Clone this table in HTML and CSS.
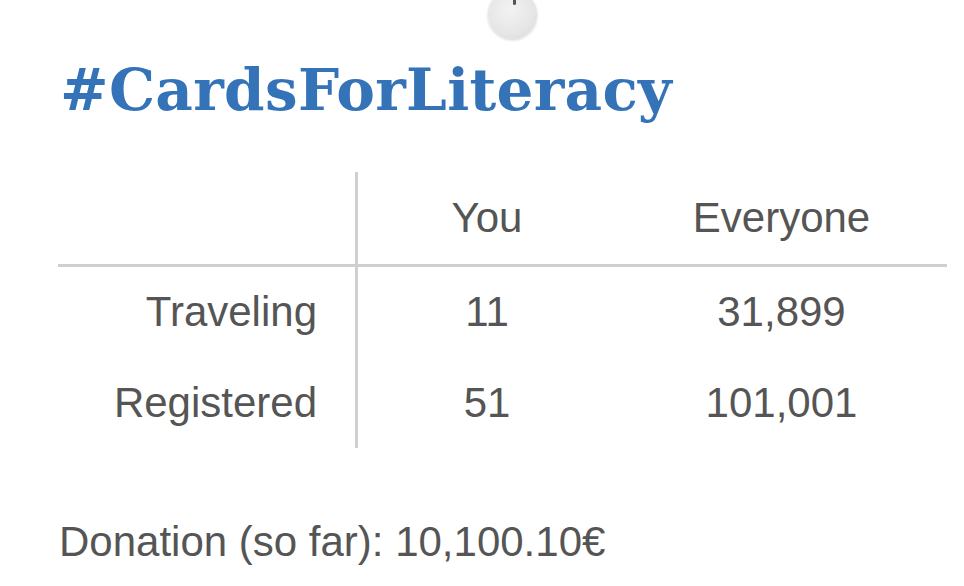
FILE: index.html
```html
<!DOCTYPE html>
<html>
<head>
<meta charset="utf-8">
<link rel="stylesheet" href="styles.css">
</head>
<body>
<div class="refresh"><span class="tick"></span></div>
<main class="page">
  <h1 class="title">#CardsForLiteracy</h1>
  <table class="stats">
    <thead>
      <tr>
        <th class="label"></th>
        <th class="col">You</th>
        <th class="col">Everyone</th>
      </tr>
    </thead>
    <tbody>
      <tr>
        <td class="label">Traveling</td>
        <td class="col">11</td>
        <td class="col">31,899</td>
      </tr>
      <tr>
        <td class="label">Registered</td>
        <td class="col">51</td>
        <td class="col">101,001</td>
      </tr>
    </tbody>
  </table>
  <p class="donation">Donation (so far): 10,100.10€</p>
</main>
</body>
</html>
```
FILE: styles.css
```css
html, body {
  margin: 0;
  padding: 0;
  background: #ffffff;
  overflow: hidden;
}
body {
  width: 964px;
  height: 586px;
  position: relative;
  font-family: "Liberation Sans", Arial, sans-serif;
  color: #555555;
}
.refresh {
  position: absolute;
  left: 488px;
  top: -10px;
  width: 49px;
  height: 49px;
  border-radius: 50%;
  background: radial-gradient(circle at 45% 40%, #f2f2f2 0%, #e6e6e6 60%, #d6d6d6 100%);
  box-shadow: 0 1px 3px rgba(0,0,0,0.18);
}
.tick {
  position: absolute;
  left: 25px;
  top: 9px;
  width: 3px;
  height: 6px;
  border-radius: 2px;
  background: #555;
}
.page {
  padding: 0 17px 0 58px;
}
.title {
  margin: 0;
  padding: 52px 0 0 2px;
  font-family: "DejaVu Serif", Georgia, serif;
  font-weight: bold;
  font-size: 58px;
  line-height: 76px;
  color: #3573b8;
  letter-spacing: 0.3px;
}
.stats {
  margin-top: 44px;
  width: 889px;
  border-collapse: collapse;
  font-size: 42px;
  color: #555555;
}
.stats th, .stats td {
  font-weight: normal;
  padding: 0;
  height: 90.5px;
}
.stats th {
  height: 92px;
  border-bottom: 3px solid #cfcfcf;
}
.stats .label {
  width: 259px;
  padding-right: 38px;
  text-align: right;
  border-right: 3px solid #cfcfcf;
}
.stats th.col:nth-child(2), .stats td.col:nth-child(2) {
  width: 258px;
}
.stats .col {
  text-align: center;
}
.donation {
  margin: 69px 0 0 1px;
  font-size: 42px;
  line-height: 50px;
}
```
